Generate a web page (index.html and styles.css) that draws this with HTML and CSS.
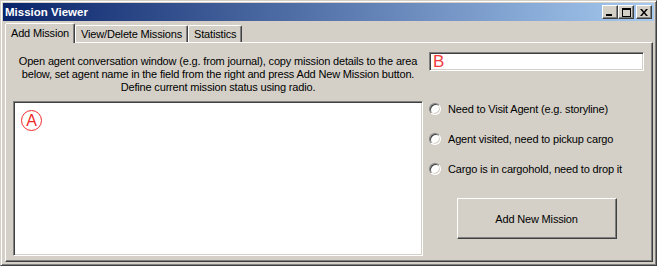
FILE: index.html
```html
<!DOCTYPE html>
<html lang="en">
<head>
    <meta charset="UTF-8">
    <title>Mission Viewer</title>
    <link rel="stylesheet" href="styles.css">
</head>
<body>

    <div class="window">
        <div class="titlebar">
            <span class="title">Mission Viewer</span>
            <div class="title-buttons">
                <span class="tbtn">
                    <svg width="8" height="7" viewBox="0 0 8 7"><rect x="0" y="5" width="6" height="2" fill="#000"/></svg>
                </span>
                <span class="tbtn">
                    <svg width="9" height="9" viewBox="0 0 9 9"><rect x="0.5" y="0.5" width="8" height="8" fill="none" stroke="#000"/><rect x="0" y="0" width="9" height="2" fill="#000"/></svg>
                </span>
                <span class="tbtn close">
                    <svg width="8" height="7" viewBox="0 0 8 7"><path d="M0 0h2l2 2.5L6 0h2L5 3.5 8 7H6L4 4.5 2 7H0l3-3.5z" fill="#000"/></svg>
                </span>
            </div>
        </div>

        <div class="tabs">
            <div class="tab active">Add Mission</div>
            <div class="tab">View/Delete Missions</div>
            <div class="tab">Statistics</div>
        </div>

        <div class="panel">
            <div class="left-col">
                <p class="hint">
                    Open agent conversation window (e.g. from journal), copy mission details to the area<br>
                    below, set agent name in the field from the right and press Add New Mission button.<br>
                    Define current mission status using radio.
                </p>
                <div class="details-box">
                    <span class="mark-a">A</span>
                </div>
            </div>

            <div class="right-col">
                <div class="agent-field"><span class="mark-b">B</span></div>

                <ul class="status-list">
                    <li><span class="radio"></span>Need to Visit Agent (e.g. storyline)</li>
                    <li><span class="radio"></span>Agent visited, need to pickup cargo</li>
                    <li><span class="radio"></span>Cargo is in cargohold, need to drop it</li>
                </ul>

                <div class="add-button">Add New Mission</div>
            </div>
        </div>
    </div>

</body>
</html>
```

FILE: styles.css
```css
/* Basic reset */
* {
    margin: 0;
    padding: 0;
    box-sizing: border-box;
}

body {
    font-family: 'Liberation Sans', Arial, sans-serif;
    font-size: 11px;
    letter-spacing: -0.17px;
    color: #000;
    background: #d4d0c8;
}

/* Window frame */
.window {
    width: 657px;
    height: 266px;
    background: #d4d0c8;
    border: 1px solid;
    border-color: #d4d0c8 #404040 #404040 #d4d0c8;
    box-shadow: inset 1px 1px #fff, inset -1px -1px #808080;
    padding: 2px;
    display: flex;
    flex-direction: column;
}

.titlebar {
    height: 18px;
    background: linear-gradient(to right, #0a246a, #a6caf0);
    display: flex;
    align-items: center;
    justify-content: space-between;
    padding: 0 2px 0 2px;
}

.title {
    color: #fff;
    font-weight: bold;
    font-size: 11.5px;
    letter-spacing: 0;
}

.title-buttons {
    display: flex;
}

.tbtn {
    width: 16px;
    height: 14px;
    background: #d4d0c8;
    border: 1px solid;
    border-color: #fff #404040 #404040 #fff;
    box-shadow: inset -1px -1px #808080;
    display: flex;
    align-items: center;
    justify-content: center;
}

.tbtn.close {
    margin-left: 2px;
}

/* Tabs */
.tabs {
    display: flex;
    align-items: flex-start;
    height: 20px;
    margin-top: 2px;
    padding-left: 2px;
}

.tab {
    height: 17px;
    margin-top: 2px;
    padding: 2px 5px 0 5px;
    border: 1px solid;
    border-bottom: none;
    border-color: #fff #404040 transparent #fff;
    box-shadow: inset -1px 0 #808080;
    border-radius: 2px 2px 0 0;
    white-space: nowrap;
}

.tab.active {
    height: 20px;
    margin-top: 0;
    padding-top: 3px;
    position: relative;
    z-index: 1;
    background: #d4d0c8;
}

/* Tab page */
.panel {
    flex: 1;
    margin: -1px 1px 1px 2px;
    border: 1px solid;
    border-color: #fff #404040 #404040 #fff;
    box-shadow: inset -1px -1px #808080;
    padding: 9px 8px 5px 7px;
    display: flex;
    gap: 6px;
}

.left-col {
    width: 410px;
    display: flex;
    flex-direction: column;
}

.hint {
    text-align: center;
    line-height: 13px;
    margin-top: 3px;
    margin-bottom: 7px;
    white-space: nowrap;
}

.details-box {
    flex: 1;
    background: #fff;
    border: 1px solid;
    border-color: #808080 #fff #fff #808080;
    box-shadow: inset 1px 1px #404040, inset -1px -1px #d4d0c8;
    padding: 8px 0 0 7px;
}

.mark-a {
    display: flex;
    align-items: center;
    justify-content: center;
    width: 21px;
    height: 21px;
    border: 1.5px solid #ee2a2a;
    border-radius: 50%;
    color: #ee2a2a;
    font-size: 16px;
    letter-spacing: 0;
    line-height: 1;
}

.right-col {
    flex: 1;
    display: flex;
    flex-direction: column;
}

.agent-field {
    height: 19px;
    background: #fff;
    border: 1px solid;
    border-color: #808080 #fff #fff #808080;
    box-shadow: inset 1px 1px #404040, inset -1px -1px #d4d0c8;
    padding-left: 3px;
    display: flex;
    align-items: center;
}

.mark-b {
    color: #f23a3a;
    font-size: 17px;
    letter-spacing: 0;
    line-height: 1;
}

.status-list {
    list-style: none;
    margin-top: 30px;
    display: flex;
    flex-direction: column;
    gap: 14px;
}

.status-list li {
    height: 16px;
    display: flex;
    align-items: center;
    gap: 7px;
    white-space: nowrap;
}

.radio {
    width: 12px;
    height: 12px;
    border-radius: 50%;
    background: #fff;
    border: 1px solid;
    border-color: #808080 #fff #fff #808080;
    box-shadow: inset 1px 1px #404040, inset -1px -1px #d4d0c8;
}

.add-button {
    width: 160px;
    height: 41px;
    margin: 21px auto 0 auto;
    border: 1px solid;
    border-color: #fff #404040 #404040 #fff;
    box-shadow: inset -1px -1px #808080;
    display: flex;
    align-items: center;
    justify-content: center;
}
```
